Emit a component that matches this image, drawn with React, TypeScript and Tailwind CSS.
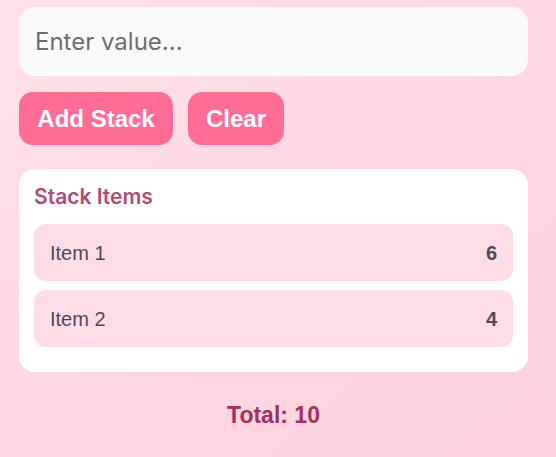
import React from "react";

export default function App() {
  const items = [
    { name: "Item 1", value: 6 },
    { name: "Item 2", value: 4 },
  ];
  const total = items.reduce((s, i) => s + i.value, 0);
  return (
    <div className="min-h-[457px] w-[556px] bg-gradient-to-br from-[#ffe1e9] to-[#ffd0de] pl-[19px] pt-[7px] font-['Liberation_Sans',Arial,sans-serif]">
      <div className="flex w-[509px] flex-col">
        <input
          placeholder="Enter value..."
          className="h-[69px] w-full rounded-[16px] bg-[#fafafa] px-[16px] font-['Inter',sans-serif] text-[24px] text-[#333] placeholder:text-[#6e6e6e] outline-none"
        />
        <div className="mt-[16px] flex gap-[15px]">
          <button className="h-[53px] w-[154px] rounded-[14px] bg-[#ff6d96] text-[24px] font-bold text-white">
            Add Stack
          </button>
          <button className="h-[53px] w-[96px] rounded-[14px] bg-[#ff6d96] text-[24px] font-bold text-white">
            Clear
          </button>
        </div>
        <div className="mt-[24px] rounded-[16px] bg-white px-[15px] pb-[25px] pt-[14px]">
          <div className="font-['Inter',sans-serif] text-[21px] font-semibold leading-[28px] text-[#b44a74]">
            Stack Items
          </div>
          <div className="mt-[13px] flex flex-col gap-[9px]">
            {items.map((it) => (
              <div
                key={it.name}
                className="flex h-[57px] items-center justify-between rounded-[12px] bg-[#ffdde7] px-[16px] text-[20px] text-[#4a4a5c]"
              >
                <span>{it.name}</span>
                <span className="font-bold">{it.value}</span>
              </div>
            ))}
          </div>
        </div>
        <div className="mt-[26px] text-center text-[23px] font-bold text-[#a3305f]">
          Total: {total}
        </div>
      </div>
    </div>
  );
}
